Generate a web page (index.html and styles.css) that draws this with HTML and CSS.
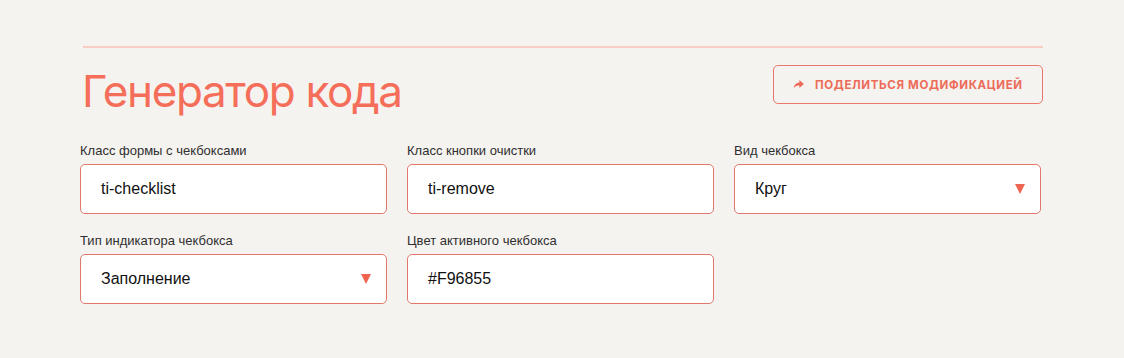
FILE: index.html
```html
<!DOCTYPE html>
<html lang="ru">
<head>
<meta charset="utf-8">
<link rel="stylesheet" href="styles.css">
</head>
<body>
<div class="wrap">
  <hr class="rule">
  <div class="head">
    <h1 class="title">Генератор кода</h1>
    <button class="share">
      <svg class="share-icon" viewBox="0 0 12 10" width="11" height="9"><path d="M7 0 L12 4.5 L7 9 L7 6.2 C4 6 2 7 0.5 9.5 C1 5.5 3.5 3.2 7 2.9 Z" fill="currentColor"/></svg>
      <span>Поделиться модификацией</span>
    </button>
  </div>
  <div class="grid">
    <div class="field">
      <label class="label">Класс формы с чекбоксами</label>
      <div class="input">ti-checklist</div>
    </div>
    <div class="field">
      <label class="label">Класс кнопки очистки</label>
      <div class="input">ti-remove</div>
    </div>
    <div class="field">
      <label class="label">Вид чекбокса</label>
      <div class="input select">Круг<span class="arrow"></span></div>
    </div>
    <div class="field">
      <label class="label">Тип индикатора чекбокса</label>
      <div class="input select">Заполнение<span class="arrow"></span></div>
    </div>
    <div class="field">
      <label class="label">Цвет активного чекбокса</label>
      <div class="input">#F96855</div>
    </div>
  </div>
</div>
</body>
</html>
```
FILE: styles.css
```css
html, body {
  margin: 0;
  padding: 0;
  background: #f5f3f0;
}
body {
  font-family: "Liberation Sans", Arial, sans-serif;
}
.wrap {
  width: 963px;
  margin-left: 80px;
  padding-top: 46px;
}
.rule {
  margin: 0 0 0 3px;
  border: 0;
  height: 2px;
  background: #f7cdc5;
}
.head {
  display: flex;
  justify-content: space-between;
  align-items: flex-start;
  margin-top: 17px;
  padding-left: 2px;
}
.title {
  margin: 0;
  font-family: "Inter", sans-serif;
  font-weight: 400;
  font-size: 44px;
  line-height: 52px;
  color: #f56e5a;
  letter-spacing: -1.35px;
}
.share {
  display: flex;
  align-items: center;
  gap: 11px;
  height: 39px;
  width: 270px;
  box-sizing: border-box;
  padding: 0 0 0 19px;
  background: transparent;
  border: 1px solid #e9786a;
  border-radius: 5px;
  color: #ec6b59;
  font-family: "Inter", sans-serif;
  font-weight: 700;
  font-size: 11.5px;
  letter-spacing: 0.65px;
  text-transform: uppercase;
}
.share-icon {
  display: block;
}
.grid {
  display: grid;
  grid-template-columns: repeat(3, 307px);
  column-gap: 20px;
  row-gap: 19px;
  margin-top: 26px;
}
.field {
  display: flex;
  flex-direction: column;
}
.label {
  font-size: 13px;
  line-height: 16px;
  color: #2f2f2f;
  margin-bottom: 5px;
  padding-left: 0;
}
.input {
  position: relative;
  height: 50px;
  box-sizing: border-box;
  background: #fff;
  border: 1px solid #e1786b;
  border-radius: 5px;
  padding: 0 20px;
  display: flex;
  align-items: center;
  font-size: 16px;
  color: #111;
}
.arrow {
  position: absolute;
  right: 15px;
  top: 19px;
  width: 0;
  height: 0;
  border-left: 5.5px solid transparent;
  border-right: 5.5px solid transparent;
  border-top: 10px solid #ef6451;
}
```
